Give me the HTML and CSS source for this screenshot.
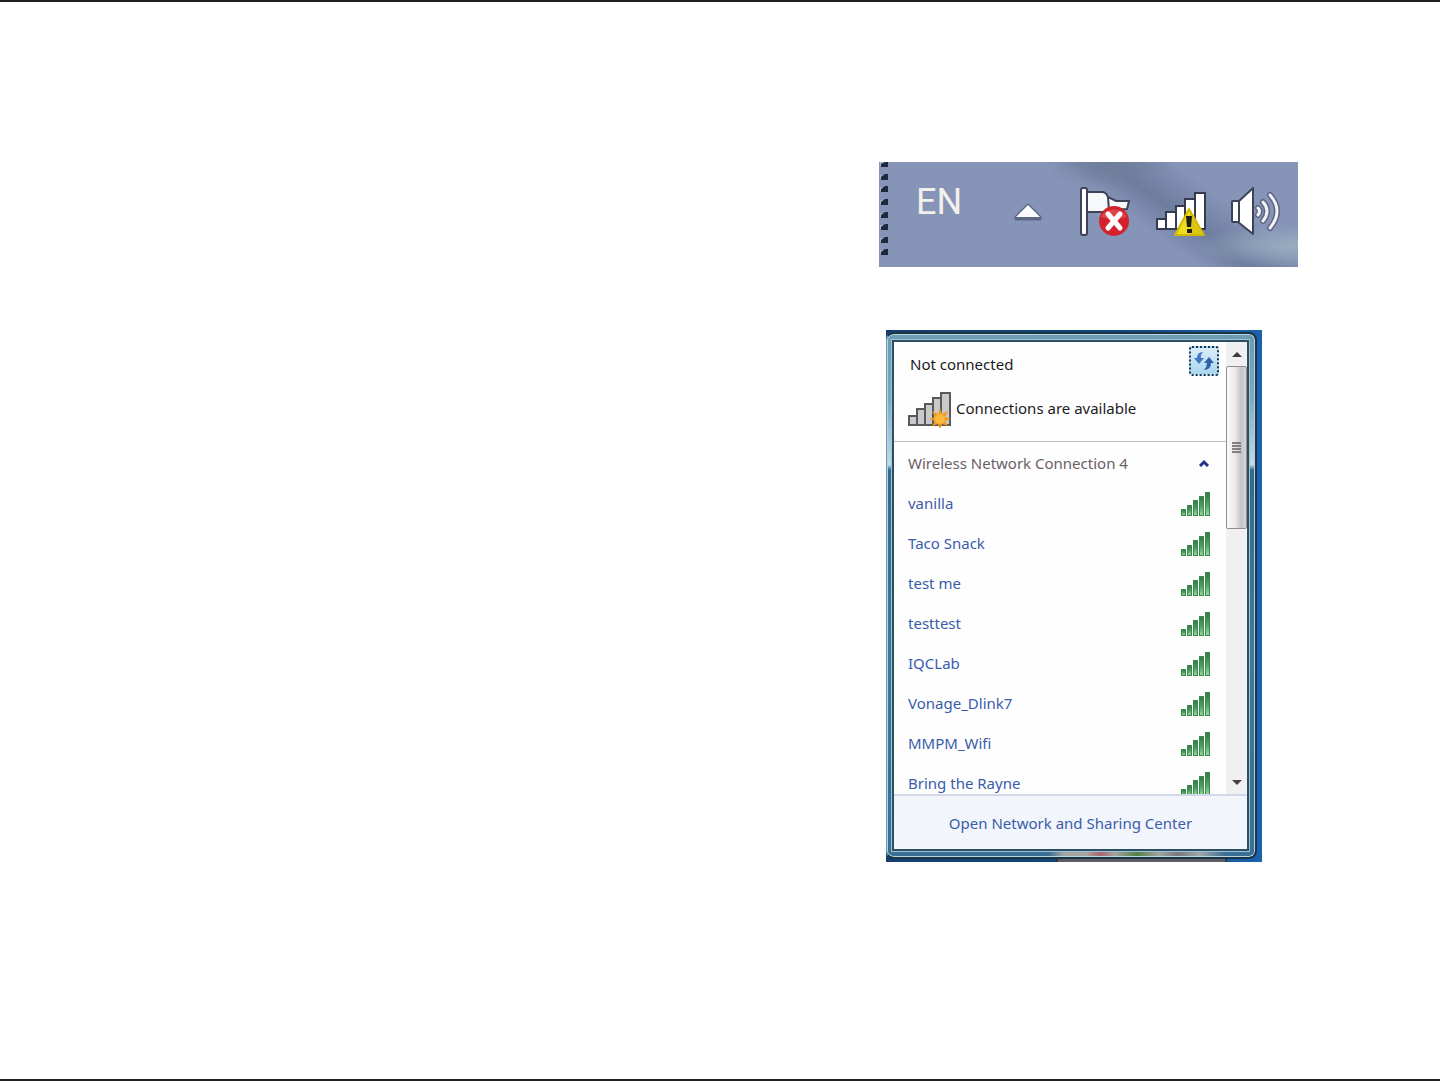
FILE: index.html
```html
<!DOCTYPE html>
<html lang="en">
<head>
    <meta charset="UTF-8">
    <meta name="viewport" content="width=device-width, initial-scale=1.0">
    <title>Wireless networks</title>
    <link rel="stylesheet" href="styles.css">
</head>
<body>
    <!-- shared symbols -->
    <svg class="symbols" aria-hidden="true">
        <defs>
            <linearGradient id="green" x1="0" y1="0" x2="0" y2="1">
                <stop offset="0" stop-color="#2b7a40"/>
                <stop offset="0.5" stop-color="#4c9f5e"/>
                <stop offset="1" stop-color="#9bdc9f"/>
            </linearGradient>
            <symbol id="bars" viewBox="0 0 32 26">
                <g fill="url(#green)" stroke="#3c8a50" stroke-width="1">
                    <rect x="1.5" y="19.5" width="4" height="6"/>
                    <rect x="7.5" y="15.5" width="4" height="10"/>
                    <rect x="13.5" y="10.5" width="4" height="15"/>
                    <rect x="19.5" y="6.5" width="4" height="19"/>
                    <rect x="25.5" y="2.5" width="4" height="23"/>
                </g>
            </symbol>
        </defs>
    </svg>

    <main class="page">
        <div class="figures">
            <div class="tray">
                <svg class="grip" width="8" height="105" viewBox="0 0 8 105" aria-hidden="true">
                    <path fill="#c3cbdd" opacity="0.5" d="M0 4h4v-4H0zM0 17h4v-4H0zM0 29h4v-4H0zM0 42h4v-4H0zM0 55h4v-4H0zM0 67h4v-4H0zM0 80h4v-4H0zM0 92h4v-4H0z"/>
                    <path fill="#20283c" d="M1 5V2L5 0h3v5zM1 18v-3l4-3h3v6zM1 30v-3l4-3h3v6zM1 43v-3l4-3h3v6zM1 56v-3l4-3h3v6zM1 68v-3l4-3h3v6zM1 81v-3l4-3h3v6zM1 93v-3l4-3h3v6z"/>
                </svg>
                <span class="lang">EN</span>
                <button class="tray-btn arrow" type="button" aria-label="Show hidden icons">
                    <svg width="32" height="54" viewBox="0 0 32 54">
                        <path d="M16 20L28 32v2H4v-2z" fill="#5c6785" stroke="#5c6785" stroke-width="3" stroke-linejoin="round"/>
                        <path d="M16 20L28 32H4z" fill="#fbfbfd"/>
                    </svg>
                </button>
                <div class="tray-icons">
                    <button class="tray-btn" type="button" aria-label="Action Center">
                        <svg width="54" height="54" viewBox="0 0 54 54">
                            <path d="M9 7h15q4 0 6 5l8 4h13l-2 8-19 1-3 2H9z" fill="#f7f8fa" stroke="#3c4359" stroke-width="2"/>
                            <path d="M30 12l1 14" stroke="#3c4359" stroke-width="2"/>
                            <rect x="3" y="3" width="6" height="47" rx="2" fill="#fff" stroke="#3c4359" stroke-width="2"/>
                            <circle cx="36" cy="36" r="15" fill="#d4222c"/>
                            <path d="M23 32a14 12 0 0 1 26 0q-13 4-26 0z" fill="#e8656a" opacity="0.5"/>
                            <path d="M30 29l12 14M42 29L30 43" stroke="#fff" stroke-width="5" stroke-linecap="round"/>
                        </svg>
                    </button>
                    <button class="tray-btn" type="button" aria-label="Network">
                        <svg width="54" height="54" viewBox="0 0 54 54">
                            <g fill="#fff" stroke="#343b50" stroke-width="2">
                                <rect x="3" y="34" width="9" height="10"/>
                                <rect x="12" y="27" width="10" height="17"/>
                                <rect x="22" y="21" width="9" height="23"/>
                                <rect x="31" y="14" width="10" height="30"/>
                                <rect x="41" y="8" width="10" height="36"/>
                            </g>
                            <path d="M35 24L50 50H21z" fill="#f0dc1e" stroke="#d2b800" stroke-width="2" stroke-linejoin="round"/>
                            <path d="M36 27l12 22H36z" fill="#d0b90a" opacity="0.6"/>
                            <path d="M32 31h6l-1 11h-4zM33 44h5v4h-5z" fill="#1e1e12"/>
                        </svg>
                    </button>
                    <button class="tray-btn" type="button" aria-label="Volume">
                        <svg width="54" height="54" viewBox="0 0 54 54">
                            <path d="M8 17L23 3v46L8 37z" fill="#fff" stroke="#3c4359" stroke-width="2" stroke-linejoin="round"/>
                            <rect x="2" y="16" width="7" height="21" rx="1" fill="#fff" stroke="#3c4359" stroke-width="2"/>
                            <g fill="none" stroke="#5c6683" stroke-width="6" stroke-linecap="round">
                                <path d="M28 23q3 3 0 7M33 17q8 9 0 19M40 10q14 16 0 33"/>
                            </g>
                            <g fill="none" stroke="#f0f2f6" stroke-width="3" stroke-linecap="round">
                                <path d="M28 23q3 3 0 7M33 17q8 9 0 19M40 10q14 16 0 33"/>
                            </g>
                        </svg>
                    </button>
                </div>
            </div>

            <div class="desktop">
                <section class="flyout">
                    <div class="flyout-inner">
                        <div class="scroll-area">
                            <div class="content">
                                <header class="status">
                                    <div class="status-top">
                                        <span>Not connected</span>
                                        <button class="refresh" type="button" aria-label="Refresh">
                                            <svg width="22" height="20" viewBox="0 0 22 20">
                                                <path d="M10 1Q4 1 4 7H1l5 6 5-6H8Q7 4 10 1z" fill="#4377bd"/>
                                                <path d="M16 6l-5 6h3q0 4-3 7 7 0 7-7h3z" fill="#2e62ab"/>
                                            </svg>
                                        </button>
                                    </div>
                                    <div class="status-info">
                                        <svg width="46" height="40" viewBox="0 0 46 40" aria-hidden="true">
                                            <g fill="#c9c9cb" stroke="#59595b" stroke-width="2">
                                                <rect x="1" y="28" width="8" height="9"/>
                                                <rect x="9" y="21" width="8" height="16"/>
                                                <rect x="17" y="16" width="8" height="21"/>
                                                <rect x="25" y="10" width="8" height="27"/>
                                                <rect x="33" y="5" width="9" height="32"/>
                                            </g>
                                            <path d="M32 20l2 6 6-3-3 6 6 2-6 2 3 5-6-2-2 6-2-6-6 2 3-5-6-2 6-2-3-6 6 3z" fill="#f39a16"/>
                                            <circle cx="32" cy="31" r="5" fill="#fbbb3c"/>
                                        </svg>
                                        <span>Connections are available</span>
                                    </div>
                                </header>
                                <div class="group">
                                    <span>Wireless Network Connection 4</span>
                                    <button class="collapse" type="button" aria-label="Collapse">
                                        <svg width="12" height="8" viewBox="0 0 12 8">
                                            <path d="M2 7l4-4 4 4" fill="none" stroke="#26308c" stroke-width="3"/>
                                        </svg>
                                    </button>
                                </div>
                                <ul class="networks">
                                    <li><a href="#">vanilla</a><svg class="signal"><use href="#bars"/></svg></li>
                                    <li><a href="#">Taco Snack</a><svg class="signal"><use href="#bars"/></svg></li>
                                    <li><a href="#">test me</a><svg class="signal"><use href="#bars"/></svg></li>
                                    <li><a href="#">testtest</a><svg class="signal"><use href="#bars"/></svg></li>
                                    <li><a href="#">IQCLab</a><svg class="signal"><use href="#bars"/></svg></li>
                                    <li><a href="#">Vonage_Dlink7</a><svg class="signal"><use href="#bars"/></svg></li>
                                    <li><a href="#">MMPM_Wifi</a><svg class="signal"><use href="#bars"/></svg></li>
                                    <li><a href="#">Bring the Rayne</a><svg class="signal"><use href="#bars"/></svg></li>
                                </ul>
                            </div>
                            <div class="scrollbar">
                                <button class="scroll-btn" type="button" aria-label="Scroll up">
                                    <svg width="10" height="5" viewBox="0 0 10 5"><path d="M5 0l5 5H0z" fill="#3d3a3c"/></svg>
                                </button>
                                <div class="thumb">
                                    <svg width="10" height="12" viewBox="0 0 10 12"><path d="M0 1h9M0 4h9M0 7h9M0 10h9" stroke="#666067" stroke-width="1.5"/></svg>
                                </div>
                                <button class="scroll-btn" type="button" aria-label="Scroll down">
                                    <svg width="10" height="5" viewBox="0 0 10 5"><path d="M0 0h10L5 5z" fill="#4a3c42"/></svg>
                                </button>
                            </div>
                        </div>
                        <footer class="footer">
                            <a href="#">Open Network and Sharing Center</a>
                        </footer>
                    </div>
                </section>
                <div class="taskbar"></div>
            </div>
        </div>
    </main>
</body>
</html>
```
FILE: styles.css
```css
* {
    box-sizing: border-box;
}

body {
    margin: 0;
    background: #fff;
    font-family: "Noto Sans", "Open Sans", sans-serif;
    font-size: 15px;
    line-height: 20px;
    color: #1c1a1e;
}

a {
    color: #3a5cab;
    text-decoration: none;
}

button {
    padding: 0;
    border: 0;
    background: none;
}

svg {
    display: block;
}

.symbols {
    position: absolute;
    width: 0;
    height: 0;
}

.page {
    display: flex;
    justify-content: flex-end;
    min-height: 100vh;
    padding: 160px 142px 160px 20px;
    border-top: 2px solid #231f20;
    border-bottom: 2px solid #231f20;
}

.figures {
    display: flex;
    flex-direction: column;
    gap: 63px;
    width: 100%;
    max-width: 419px;
}

/* notification area */
.tray {
    display: flex;
    align-items: flex-start;
    height: 105px;
    padding: 0 14px 0 1px;
    background:
        radial-gradient(ellipse at 100% 80%, #97adbf 0, rgba(151, 173, 191, 0) 18%),
        radial-gradient(ellipse at 55% 0, #707e9b 0, rgba(112, 126, 155, 0) 20%),
        linear-gradient(36deg, rgba(110, 125, 158, 0) 57%, #6e7d9e 66%, rgba(110, 125, 158, 0) 78%),
        #8694b8;
}

.lang {
    margin: 18px auto 0 28px;
    font-family: Roboto, "Liberation Sans", sans-serif;
    font-size: 36px;
    font-weight: 400;
    line-height: 44px;
    color: #f1f0ea;
}

.tray-btn {
    margin-top: 23px;
}

.arrow {
    margin-right: 34px;
}

.tray-icons {
    display: flex;
    gap: 22px;
}

/* piece of desktop behind the flyout */
.desktop {
    width: 376px;
    margin-left: 7px;
    padding: 2px 5px 0 0;
    background: linear-gradient(90deg, #143f70, #10477f 60%, #1b62ac);
}

.flyout {
    padding: 6px 6px 6px 5px;
    border: 2px solid #1d3443;
    border-left: 1px solid #6d9db5;
    border-radius: 8px;
    box-shadow: inset 0 0 0 1px #b4d5e2;
    background:
        linear-gradient(90deg, transparent 44%, #a3a5a6 48%, #a8a5a5 54%, #a8686c 58%, #a3a5a3 62%, #567f45 68%, #a3a5a3 74%, #77797b 79%, #a3a8ab 85%, transparent 92%) bottom / 100% 6px no-repeat,
        linear-gradient(180deg, #6c9bb2 0, #7ba8bc 12%, #c4dbe5 25%, #34698d 26%, #3d789d 60%, #396f94 100%);
}

.flyout-inner {
    border: 2px solid #2c4f63;
    outline: 1px solid #9cc4d3;
    background: #fefefe;
}

.scroll-area {
    display: flex;
    height: 452px;
    overflow: hidden;
}

.content {
    flex: 1;
}

.status {
    height: 100px;
    padding: 4px 7px 0 14px;
    border-bottom: 1px solid #c3bbbd;
}

.status-top {
    display: flex;
    justify-content: space-between;
    height: 42px;
    padding-left: 2px;
    line-height: 36px;
}

.refresh {
    display: flex;
    align-items: center;
    justify-content: center;
    width: 30px;
    height: 30px;
    border: 2px dotted #193653;
    border-radius: 3px;
    background: linear-gradient(180deg, #d9edf9, #aad6f0);
}

.status-info {
    display: flex;
    gap: 2px;
    line-height: 40px;
}

.group {
    display: flex;
    align-items: center;
    justify-content: space-between;
    height: 41px;
    padding: 0 16px 0 14px;
    color: #6a5f66;
}

.networks {
    margin: 0;
    padding: 0;
    list-style: none;
}

.networks li {
    display: flex;
    align-items: center;
    justify-content: space-between;
    height: 40px;
    padding: 0 14px;
}

.signal {
    width: 32px;
    height: 26px;
}

/* scrollbar */
.scrollbar {
    display: flex;
    flex-direction: column;
    width: 21px;
    background: #f1f0f1;
}

.scroll-btn {
    display: flex;
    align-items: center;
    justify-content: center;
    height: 24px;
}

.thumb {
    display: flex;
    align-items: center;
    justify-content: center;
    height: 163px;
    margin-bottom: auto;
    border: 1px solid #948b8f;
    border-radius: 2px;
    background: linear-gradient(90deg, #fbfafb 0, #e9e7ea 45%, #c5c2c8 75%, #d9d6db 100%);
}

.footer {
    height: 55px;
    border-top: 2px solid #d3d8e6;
    background: #f2f6fc;
    line-height: 54px;
    text-align: center;
}

.taskbar {
    height: 3px;
    margin-left: 170px;
    margin-right: 30px;
    background: #5d5c60;
    border-left: 2px solid #24394c;
    border-right: 2px solid #24394c;
}
```
